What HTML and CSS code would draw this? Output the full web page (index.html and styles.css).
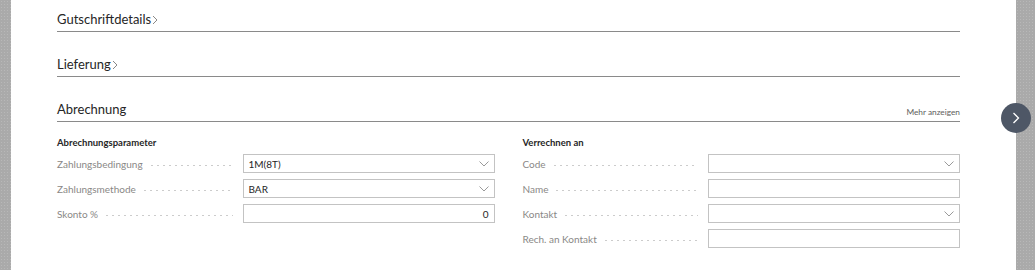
FILE: index.html
```html
<!DOCTYPE html>
<html lang="de">
<head>
<meta charset="utf-8">
<link rel="stylesheet" href="styles.css">
</head>
<body>
<div class="page">
  <div class="strip strip-left"></div>
  <main class="main">
    <section class="section">
      <div class="head"><span class="title">Gutschriftdetails</span><svg class="chev" viewBox="0 0 6 10" width="6" height="10"><path d="M1 1l4 4-4 4" fill="none" stroke="#8a8886" stroke-width="1"/></svg></div>
    </section>
    <section class="section">
      <div class="head"><span class="title">Lieferung</span><svg class="chev" viewBox="0 0 6 10" width="6" height="10"><path d="M1 1l4 4-4 4" fill="none" stroke="#8a8886" stroke-width="1"/></svg></div>
    </section>
    <section class="section">
      <div class="head"><span class="title">Abrechnung</span><span class="more">Mehr anzeigen</span></div>
      <div class="cols">
        <div class="col">
          <div class="group">Abrechnungsparameter</div>
          <div class="row"><span class="lbl">Zahlungsbedingung</span><span class="dots"></span><div class="field"><span class="val">1M(8T)</span><svg class="dd" viewBox="0 0 10 6" width="10" height="6"><path d="M0.5 0.5l4.5 4.5 4.5-4.5" fill="none" stroke="#9a9a9a" stroke-width="1"/></svg></div></div>
          <div class="row"><span class="lbl">Zahlungsmethode</span><span class="dots"></span><div class="field"><span class="val">BAR</span><svg class="dd" viewBox="0 0 10 6" width="10" height="6"><path d="M0.5 0.5l4.5 4.5 4.5-4.5" fill="none" stroke="#9a9a9a" stroke-width="1"/></svg></div></div>
          <div class="row"><span class="lbl">Skonto %</span><span class="dots"></span><div class="field num"><span class="val">0</span></div></div>
        </div>
        <div class="col">
          <div class="group">Verrechnen an</div>
          <div class="row"><span class="lbl">Code</span><span class="dots"></span><div class="field"><span class="val"></span><svg class="dd" viewBox="0 0 10 6" width="10" height="6"><path d="M0.5 0.5l4.5 4.5 4.5-4.5" fill="none" stroke="#9a9a9a" stroke-width="1"/></svg></div></div>
          <div class="row"><span class="lbl">Name</span><span class="dots"></span><div class="field"><span class="val"></span></div></div>
          <div class="row"><span class="lbl">Kontakt</span><span class="dots"></span><div class="field"><span class="val"></span><svg class="dd" viewBox="0 0 10 6" width="10" height="6"><path d="M0.5 0.5l4.5 4.5 4.5-4.5" fill="none" stroke="#9a9a9a" stroke-width="1"/></svg></div></div>
          <div class="row"><span class="lbl">Rech. an Kontakt</span><span class="dots"></span><div class="field"><span class="val"></span></div></div>
        </div>
      </div>
    </section>
  </main>
  <div class="strip strip-right"></div>
  <button class="nav-btn" aria-label="Weiter"><svg viewBox="0 0 8 12" width="8" height="12"><path d="M1.5 1l5 5-5 5" fill="none" stroke="#fff" stroke-width="1.3"/></svg></button>
</div>
</body>
</html>
```
FILE: styles.css
```css
html, body {
  margin: 0;
  padding: 0;
  background: #fff;
}
body {
  font-family: Lato, "Noto Sans", sans-serif;
  color: #333;
}
.page {
  position: relative;
  display: flex;
  width: 1035px;
  height: 270px;
  overflow: hidden;
}
.strip {
  background-color: #aaaaaa;
  background-image: radial-gradient(#b8b8b8 0.6px, transparent 0.8px);
  background-size: 3px 3px;
}
.strip-left {
  width: 11px;
  flex: none;
}
.strip-right {
  width: 19px;
  flex: none;
}
.main {
  flex: 1;
  padding: 0 56px 0 46px;
}
.section {
  margin-bottom: 13px;
}
.head {
  display: flex;
  align-items: flex-end;
  height: 31px;
  border-bottom: 1px solid #8a8a8a;
}
.title {
  font-size: 13px;
  line-height: 18px;
  color: #262626;
  padding-bottom: 3px;
}
.chev {
  margin: 0 0 6px 1px;
}
.more {
  margin-left: auto;
  font-size: 8.3px;
  line-height: 12px;
  color: #605e5c;
  padding-bottom: 3px;
}
.cols {
  display: grid;
  grid-template-columns: 1fr 1fr;
  column-gap: 28px;
  padding-top: 13px;
}
.group {
  font-size: 9.5px;
  font-weight: 700;
  color: #262626;
  line-height: 16px;
  margin-bottom: 3px;
}
.row {
  display: flex;
  align-items: center;
  height: 19px;
  margin-bottom: 6px;
}
.lbl {
  font-size: 10px;
  color: #8a8886;
  white-space: nowrap;
}
.dots {
  flex: 1;
  height: 1px;
  margin: 3px 10px 0 6px;
  background-image: radial-gradient(#cccccc 0.6px, transparent 0.9px);
  background-size: 6px 1px;
  background-repeat: repeat-x;
}
.field {
  width: 252px;
  height: 19px;
  box-sizing: border-box;
  border: 1px solid #c3c3c3;
  display: flex;
  align-items: center;
  padding: 0 5px 0 5px;
}
.val {
  flex: 1;
  font-size: 10px;
  color: #262626;
}
.num .val {
  text-align: right;
}
.dd {
  flex: none;
}
.nav-btn {
  position: absolute;
  left: 1001px;
  top: 103px;
  width: 30px;
  height: 30px;
  border-radius: 50%;
  border: none;
  padding: 0;
  background: #4e5766;
  display: flex;
  align-items: center;
  justify-content: center;
}
```
